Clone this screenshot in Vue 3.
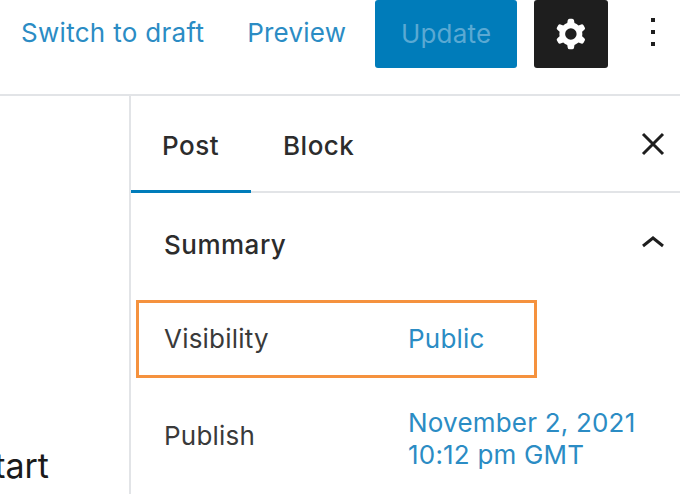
<template>
  <div class="page">
    <header class="topbar">
      <a class="link switch">Switch to draft</a>
      <a class="link preview">Preview</a>
      <button class="update">Update</button>
      <button class="gear" aria-label="Settings">
        <svg width="46" height="46" viewBox="0 0 24 24" fill="#fff">
          <path fill-rule="evenodd" d="M10.289 4.836A1 1 0 0 1 11.275 4h1.306a1 1 0 0 1 .987.836l.244 1.466c.787.26 1.503.679 2.108 1.218l1.393-.522a1 1 0 0 1 1.216.437l.653 1.13a1 1 0 0 1-.23 1.273l-1.148.944a6.025 6.025 0 0 1 0 2.435l1.149.946a1 1 0 0 1 .23 1.272l-.653 1.13a1 1 0 0 1-1.216.437l-1.394-.522c-.605.54-1.32.958-2.108 1.218l-.244 1.466a1 1 0 0 1-.987.836h-1.306a1 1 0 0 1-.986-.836l-.244-1.466a5.995 5.995 0 0 1-2.108-1.218l-1.394.522a1 1 0 0 1-1.217-.436l-.653-1.131a1 1 0 0 1 .23-1.272l1.149-.946a6.026 6.026 0 0 1 0-2.435l-1.148-.944a1 1 0 0 1-.23-1.272l.653-1.131a1 1 0 0 1 1.217-.437l1.393.522a5.994 5.994 0 0 1 2.108-1.218l.244-1.466ZM14.929 12a3 3 0 1 1-6 0 3 3 0 0 1 6 0Z"/>
        </svg>
      </button>
      <svg class="dots" width="48" height="48" viewBox="0 0 24 24" fill="#1e1e1e">
        <path d="M13 19h-2v-2h2v2zm0-6h-2v-2h2v2zm0-6h-2V5h2v2z"/>
      </svg>
    </header>

    <div class="body">
      <div class="canvas">
        <span class="canvas-text">Start</span>
      </div>
      <aside class="sidebar">
        <div class="tabs">
          <div class="tab active">Post</div>
          <div class="tab block">Block</div>
          <svg class="close" width="34" height="34" viewBox="0 0 34 34" fill="none" stroke="#1e1e1e" stroke-width="3">
            <path d="M7 7l20 20M27 7L7 27"/>
          </svg>
        </div>
        <section class="summary">
          <div class="summary-head">
            <span>Summary</span>
            <svg class="chevron" width="44" height="44" viewBox="0 0 44 44" fill="none" stroke="#1e1e1e" stroke-width="3">
              <path d="M12 23l10-8 10 8"/>
            </svg>
          </div>
          <div class="row visibility">
            <span class="label">Visibility</span>
            <a class="link value">Public</a>
          </div>
          <div class="row publish">
            <span class="label">Publish</span>
            <a class="link value">November 2, 2021<br>10:12 pm GMT</a>
          </div>
          <div class="highlight"></div>
        </section>
      </aside>
    </div>
  </div>
</template>

<script setup>
</script>

<style>
html, body {
  margin: 0;
  background: #fff;
  overflow: hidden;
}
</style>

<style scoped>
.page {
  width: 680px;
  height: 494px;
  overflow: hidden;
  font-family: Inter, "Liberation Sans", sans-serif;
  font-size: 26px;
  letter-spacing: 0.2px;
  color: #3a3a3a;
}

.topbar {
  height: 94px;
  border-bottom: 2px solid #e2e4e7;
  display: flex;
  align-items: flex-start;
}

.link {
  color: #2b8cc4;
}

.switch {
  margin: 17px 0 0 21px;
  letter-spacing: 0.3px;
}

.preview {
  margin: 17px 0 0 43px;
}

.update {
  margin-left: 29px;
  width: 142px;
  height: 68px;
  border: 0;
  border-radius: 3px;
  background: #007cba;
  color: #5aa9d3;
  font: inherit;
  letter-spacing: inherit;
  padding: 0 0 2px;
}

.gear {
  margin-left: 17px;
  width: 74px;
  height: 68px;
  border: 0;
  border-radius: 3px;
  background: #1e1e1e;
  display: flex;
  align-items: center;
  justify-content: center;
  padding: 0;
}

.dots {
  margin: 8px 0 0 21px;
}

.body {
  display: flex;
  height: 398px;
}

.canvas {
  width: 129px;
  flex: none;
  position: relative;
  overflow: hidden;
}

.canvas-text {
  position: absolute;
  right: 80px;
  top: 349px;
  font-size: 34px;
  letter-spacing: 0;
  color: #1a1a1a;
}

.sidebar {
  flex: 1;
  border-left: 2px solid #e2e4e7;
}

.tabs {
  height: 95px;
  border-bottom: 2px solid #e2e4e7;
  display: flex;
  position: relative;
  font-weight: 500;
  letter-spacing: 0.5px;
  color: #2c2c2c;
}

.tab {
  padding-top: 33px;
  line-height: 34px;
}

.tab.active {
  width: 120px;
  box-sizing: border-box;
  padding-left: 31px;
  height: 97px;
  border-bottom: 3px solid #007cba;
}

.tab.block {
  margin-left: 32px;
}

.close {
  position: absolute;
  right: 10px;
  top: 31px;
}

.summary {
  position: relative;
  padding: 0 5px 0 33px;
}

.summary-head {
  display: flex;
  justify-content: space-between;
  align-items: center;
  height: 103px;
  font-weight: 500;
  letter-spacing: 0.5px;
  color: #2c2c2c;
}

.row {
  display: flex;
  line-height: 32px;
}

.label {
  width: 244px;
  flex: none;
}

.visibility {
  margin-top: 27px;
  margin-bottom: 52px;
}

.publish .label {
  padding-top: 13px;
}

.highlight {
  position: absolute;
  left: 5px;
  top: 107px;
  width: 395px;
  height: 72px;
  border: 3px solid #f5923e;
}
</style>
